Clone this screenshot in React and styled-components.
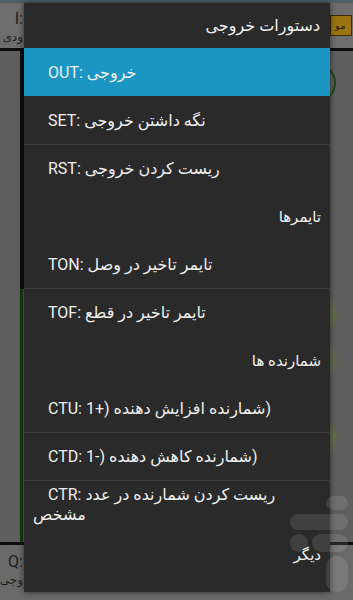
import React from "react";
import styled, { createGlobalStyle } from "styled-components";

const GlobalStyle = createGlobalStyle`
	html, body {
		margin: 0;
		padding: 0;
		background: #5e5e5e;
	}
	* {
		box-sizing: border-box;
	}
`;

// Screen behind the dialog (dimmed)
const Screen = styled.div`
	position: relative;
	width: 353px;
	height: 600px;
	overflow: hidden;
	background: #5f5f5f;
	font-family: Roboto, "DejaVu Sans", sans-serif;
`;

const TopStrip = styled.div`
	height: 3px;
	background: #4d5f6b;
`;

const AppBar = styled.div`
	height: 45px;
	background: #6e6e6e;
	display: flex;
	justify-content: space-between;
	align-items: flex-start;
	padding: 6px 1px 0 0;
`;

const BarLabel = styled.div`
	display: flex;
	flex-direction: column;
	align-items: flex-end;
	width: 23px;
	color: #1e1e1e;
	font-size: 12px;
	line-height: 16px;
	white-space: nowrap;

	span:first-child {
		font-size: 16px;
		line-height: 20px;
	}
`;

const Tag = styled.div`
	margin-top: 6px;
	width: 22px;
	height: 21px;
	background: #9a7410;
	border: 1px solid #3a2e08;
	color: #2c2006;
	font-size: 10px;
	line-height: 19px;
	padding-left: 4px;
	overflow: hidden;
	white-space: nowrap;
`;

const Rule = styled.div`
	height: 3px;
	background: #0c0c0c;
`;

const Body = styled.div`
	height: 491px;
	display: flex;
	justify-content: space-between;
	padding-left: 20px;
`;

const Rail = styled.div`
	display: flex;
	flex-direction: column;
	width: 4px;
`;

const RailPart = styled.div`
	height: ${(p) => p.$h}px;
	background: ${(p) => p.$color};
	width: ${(p) => p.$w || 3}px;
`;

const Contacts = styled.div`
	display: flex;
	flex-direction: column;
	align-items: flex-end;
	padding-right: 17px;
`;

const Contact = styled.div`
	margin-top: ${(p) => p.$top}px;
	width: 40px;
	height: 40px;
	border-radius: 50%;
	border: 2px solid ${(p) => (p.$ring ? "#1f4a16" : "transparent")};
	background: ${(p) => (p.$ring ? "transparent" : "rgba(110, 140, 40, 0.35)")};
	filter: ${(p) => (p.$ring ? "none" : "blur(2px)")};
`;

const BottomBar = styled.div`
	height: 58px;
	background: #6a6a6a;
	padding: 7px 0 0 0;
`;

// faint store watermark on top of everything
const Watermark = styled.div`
	position: absolute;
	left: 290px;
	top: 496px;
	width: 58px;
	display: flex;
	flex-direction: column;
	gap: 4px;
	opacity: 0.1;
	pointer-events: none;
`;

const BlobRow = styled.div`
	display: flex;
	gap: 4px;
	justify-content: ${(p) => p.$justify || "flex-start"};
`;

const Blob = styled.div`
	height: ${(p) => p.$h}px;
	width: ${(p) => p.$w}px;
	border-radius: ${(p) => Math.min(p.$h, p.$w) / 2}px;
	background: #ffffff;
`;

// Dialog
const Dialog = styled.div`
	position: absolute;
	top: 3px;
	left: 24px;
	width: 306px;
	height: 589px;
	background: #2a2a2a;
	overflow: hidden;
	box-shadow: 0 0 6px rgba(0, 0, 0, 0.6);
	color: #ececec;
`;

const Title = styled.div`
	height: 45px;
	direction: rtl;
	padding-right: 10px;
	font-size: 16px;
	line-height: 45px;
	color: #f2f2f2;
`;

const Item = styled.div`
	min-height: ${(p) => (p.$tall ? 50 : 48)}px;
	display: flex;
	flex-direction: column;
	justify-content: center;
	padding: ${(p) => (p.$tall ? "3px 16px 5px 9px" : "0 14px 0 24px")};
	font-size: 16px;
	line-height: 20px;
	background: ${(p) => (p.$active ? "#1b96c3" : "transparent")};
	border-top: 1px solid ${(p) => (p.$divider ? "#3a3a3a" : "transparent")};
	color: #efefef;
	white-space: nowrap;
`;

const Line = styled.div`
	direction: ltr;
	padding-left: ${(p) => (p.$indent ? 15 : 0)}px;
`;

const Ltr = styled.span`
	direction: ltr;
	unicode-bidi: isolate;
`;

const Rtl = styled.span`
	direction: rtl;
	unicode-bidi: isolate;
`;

const Header = styled.div`
	height: 48px;
	direction: rtl;
	padding-right: 9px;
	padding-top: 2px;
	display: flex;
	align-items: center;
	font-size: 15px;
	color: #efefef;
`;

const rows = [
	{ type: "item", code: "OUT: ", text: "خروجی", active: true },
	{ type: "item", code: "SET: ", text: "نگه داشتن خروجی" },
	{ type: "item", code: "RST: ", text: "ریست کردن خروجی", divider: true },
	{ type: "header", text: "تایمرها" },
	{ type: "item", code: "TON: ", text: "تایمر تاخیر در وصل" },
	{ type: "item", code: "TOF: ", text: "تایمر تاخیر در قطع", divider: true },
	{ type: "header", text: "شمارنده ها" },
	{ type: "item", code: "CTU: 1+) ", text: "شمارنده افزایش دهنده", tail: ")" },
	{ type: "item", code: "CTD: 1-) ", text: "شمارنده کاهش دهنده", tail: ")", divider: true },
	{
		type: "item",
		code: "CTR: ",
		text: "ریست کردن شمارنده در عدد",
		more: "مشخص",
		divider: true,
		tall: true,
	},
	{ type: "header", text: "دیگر" },
];

export default function App() {
	return (
		<>
			<GlobalStyle />
			<Screen>
				<TopStrip />
				<AppBar>
					<BarLabel>
						<span>I:</span>
						<span>ودی</span>
					</BarLabel>
					<Tag>مو</Tag>
				</AppBar>
				<Rule />
				<Body>
					<Rail>
						<RailPart $h={238} $color="#0e0e0e" $w={4} />
						<RailPart $h={253} $color="#163a12" />
					</Rail>
					<Contacts>
						<Contact $ring $top={12} />
						<Contact $top={192} />
						<Contact $top={6} />
						<Contact $top={36} />
					</Contacts>
				</Body>
				<Rule />
				<BottomBar>
					<BarLabel>
						<span>Q:</span>
						<span>وجی</span>
					</BarLabel>
				</BottomBar>

				<Dialog>
					<Title>دستورات خروجی</Title>
					{rows.map((row, i) =>
						row.type === "header" ? (
							<Header key={i}>{row.text}</Header>
						) : (
							<Item
								key={i}
								$active={row.active}
								$divider={row.divider}
								$tall={row.tall}
							>
								<Line $indent={row.tall}>
									<Ltr>{row.code}</Ltr>
									<Rtl>{row.text}</Rtl>
									{row.tail && <Ltr>{row.tail}</Ltr>}
								</Line>
								{row.more && (
									<Line>
										<Rtl>{row.more}</Rtl>
									</Line>
								)}
							</Item>
						)
					)}
				</Dialog>

				<Watermark>
					<BlobRow $justify="flex-end">
						<Blob $w={22} $h={14} />
					</BlobRow>
					<BlobRow>
						<Blob $w={58} $h={16} />
					</BlobRow>
					<BlobRow>
						<Blob $w={18} $h={18} />
						<Blob $w={36} $h={18} />
					</BlobRow>
					<BlobRow $justify="flex-end">
						<Blob $w={22} $h={36} />
					</BlobRow>
				</Watermark>
			</Screen>
		</>
	);
}
